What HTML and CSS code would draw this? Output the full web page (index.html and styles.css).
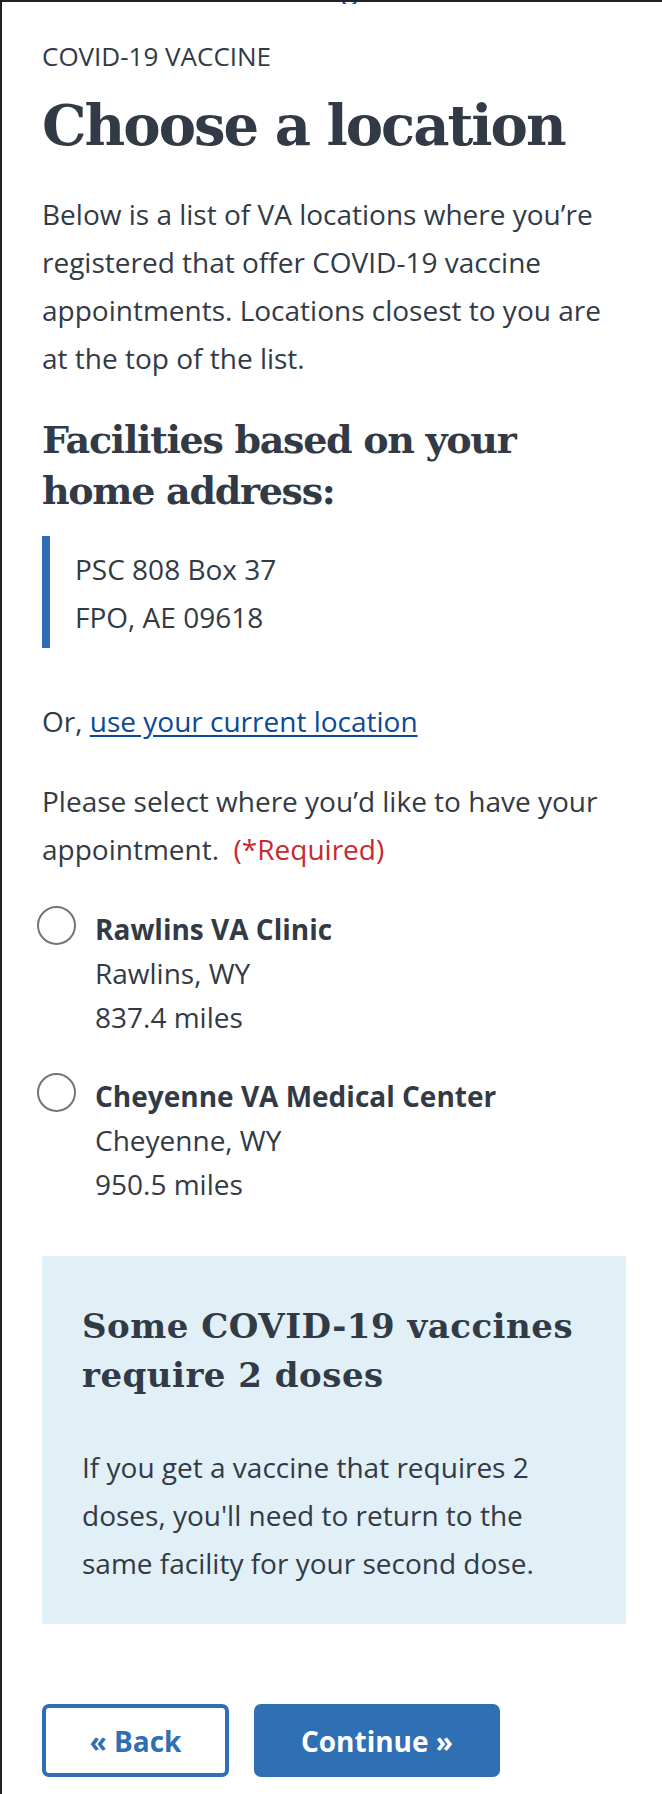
FILE: index.html
```html
<!DOCTYPE html>
<html lang="en">
<head>
<meta charset="utf-8">
<title>Choose a location</title>
<link rel="stylesheet" href="styles.css">
</head>
<body>
<div class="crumb-clip"><a class="crumb" href="#">g</a></div>
<main class="page">
  <p class="eyebrow">COVID-19 VACCINE</p>
  <h1 class="title">Choose a location</h1>
  <p class="intro">Below is a list of VA locations where you’re registered that offer COVID-19 vaccine appointments. Locations closest to you are at the top of the list.</p>
  <h2 class="subhead">Facilities based on your home address:</h2>
  <div class="address">
    <div>PSC 808 Box 37</div>
    <div>FPO, AE 09618</div>
  </div>
  <p class="alt">Or, <a class="link" href="#">use your current location</a></p>
  <p class="prompt">Please select where you’d like to have your appointment.&nbsp; <span class="req">(*Required)</span></p>
  <div class="choices">
    <label class="choice">
      <input class="choice-input" type="radio" name="facility">
      <span class="radio"></span>
      <span class="info">
        <strong class="info-name">Rawlins VA Clinic</strong>
        <span>Rawlins, WY</span>
        <span>837.4 miles</span>
      </span>
    </label>
    <label class="choice">
      <input class="choice-input" type="radio" name="facility">
      <span class="radio"></span>
      <span class="info">
        <strong class="info-name">Cheyenne VA Medical Center</strong>
        <span>Cheyenne, WY</span>
        <span>950.5 miles</span>
      </span>
    </label>
  </div>
  <section class="notice">
    <h3 class="notice-title">Some COVID-19 vaccines require 2 doses</h3>
    <p class="notice-text">If you get a vaccine that requires 2 doses, you'll need to return to the same facility for your second dose.</p>
  </section>
  <div class="actions">
    <button class="btn btn-outline" type="button">« Back</button>
    <button class="btn btn-primary" type="button">Continue »</button>
  </div>
</main>
</body>
</html>
```
FILE: styles.css
```css
html, body {
  background: #fff;
}
body {
  margin: 0;
  min-height: 1792px;
  box-sizing: border-box;
  border-top: 2px solid #222;
  border-left: 2px solid #222;
  font-family: "Open Sans", "Noto Sans", sans-serif;
  font-size: 28px;
  line-height: 48px;
  color: #323a45;
}
.crumb-clip {
  height: 2px;
  overflow: hidden;
}
.crumb {
  display: block;
  margin: -28px 0 0 340px;
  font-size: 28px;
  line-height: 28px;
  color: #004795;
  text-decoration: none;
}
.page {
  width: 584px;
  padding: 32px 0 20px 40px;
}
.eyebrow {
  margin: 0;
  font-size: 26px;
  line-height: 40px;
}
.title {
  margin: 17px 0 0;
  font-family: "DejaVu Serif", serif;
  font-weight: 700;
  font-size: 56px;
  line-height: 64px;
  letter-spacing: -2px;
}
.intro {
  margin: 33px 0 0;
}
.subhead {
  margin: 32px 0 0;
  font-family: "DejaVu Serif", serif;
  font-weight: 700;
  font-size: 38px;
  line-height: 51px;
  letter-spacing: -1.3px;
}
.address {
  margin-top: 20px;
  border-left: 8px solid #2e6db4;
  padding: 9px 0 7px 25px;
}
.alt {
  margin: 49px 0 0;
}
.link {
  color: #0a4a96;
  text-decoration: underline;
  text-underline-offset: 3px;
}
.prompt {
  margin: 32px 0 0;
}
.req {
  color: #c62a2f;
}
.choices {
  margin-top: 34px;
  display: flex;
  flex-direction: column;
  gap: 35px;
}
.choice {
  display: flex;
  align-items: flex-start;
  gap: 19px;
}
.choice-input {
  display: none;
}
.radio {
  flex: none;
  width: 39px;
  height: 39px;
  box-sizing: border-box;
  margin: -1px 0 0 -5px;
  border: 2px solid #757575;
  border-radius: 50%;
  background: #fff;
}
.info {
  display: flex;
  flex-direction: column;
  line-height: 44px;
}
.info-name {
  font-weight: 700;
}
.notice {
  margin-top: 50px;
  background: #e1eff6;
  padding: 46px 46px 37px 40px;
}
.notice-title {
  margin: 0;
  font-family: "DejaVu Serif", serif;
  font-weight: 700;
  font-size: 34px;
  line-height: 49px;
  letter-spacing: 0.5px;
}
.notice-text {
  margin: 43px 0 0;
}
.actions {
  margin-top: 80px;
  display: flex;
  gap: 25px;
}
.btn {
  height: 73px;
  box-sizing: border-box;
  border-radius: 7px;
  font-family: "Open Sans", "Noto Sans", sans-serif;
  font-weight: 700;
  font-size: 28px;
  cursor: pointer;
}
.btn-outline {
  width: 187px;
  border: 4px solid #2f6fb4;
  color: #2f6fb4;
  background: #fff;
}
.btn-primary {
  width: 246px;
  border: none;
  color: #fff;
  background: #2f6fb4;
}
```
